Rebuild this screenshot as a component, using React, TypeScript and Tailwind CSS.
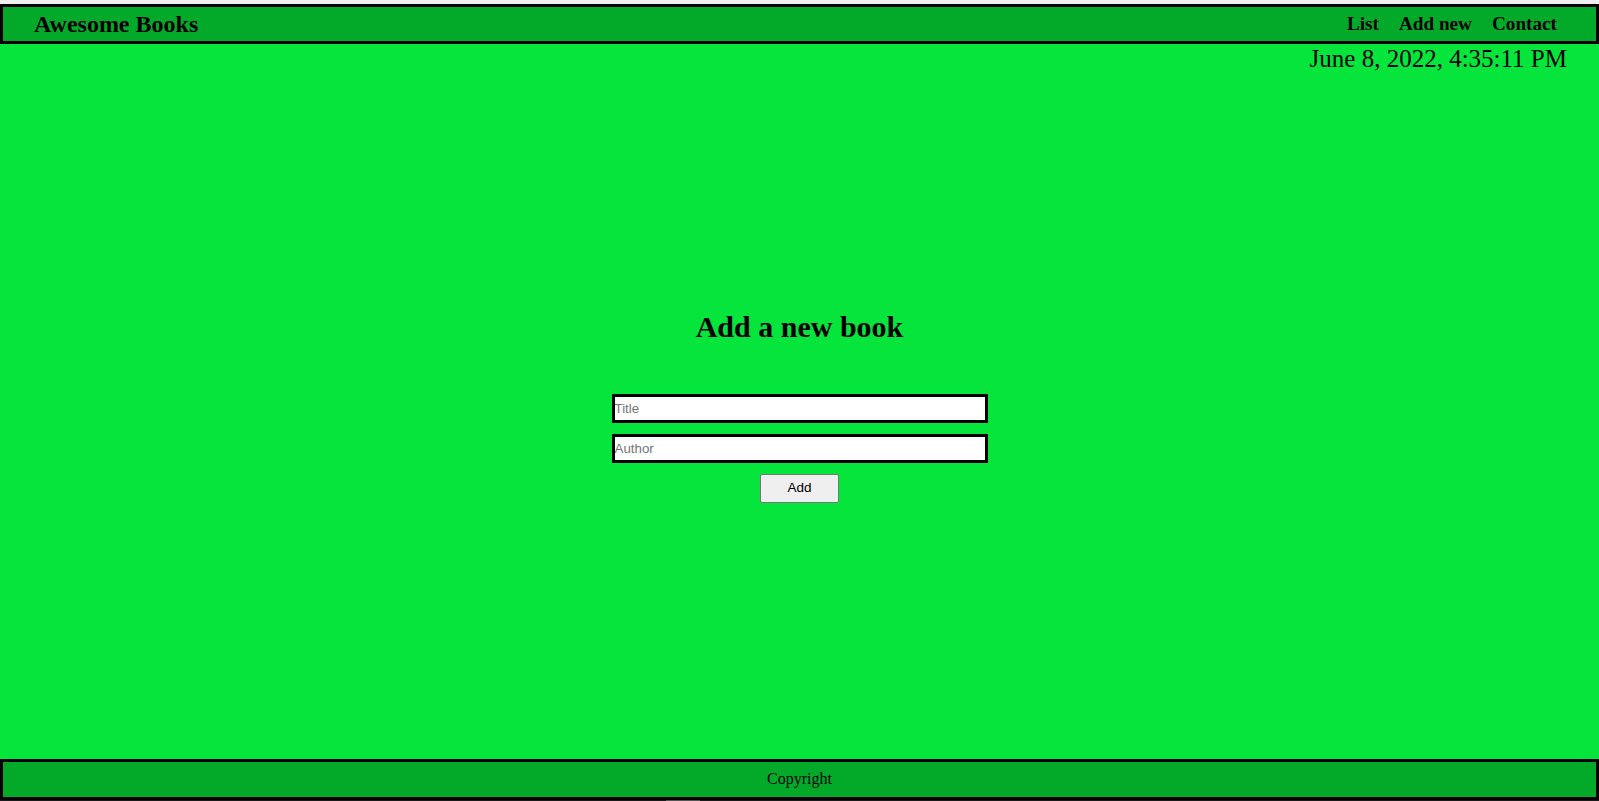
import React from "react";

export default function App() {
  return (
    <div className="flex h-[801px] w-full flex-col overflow-hidden bg-[#05e53b]" style={{ fontFamily: '"Liberation Serif", "Times New Roman", serif' }}>
      <div className="h-[4px] shrink-0 bg-[#f0f0f0]" />
      <header className="flex h-[40px] shrink-0 items-center justify-between border-[3px] border-black bg-[#03aa2a] pl-[31px] pr-[39px] text-black">
        <h1 className="text-[24px] font-bold leading-none">Awesome Books</h1>
        <nav className="flex items-center gap-[20px] text-[19.2px] font-bold leading-none">
          <span>List</span>
          <span>Add new</span>
          <span>Contact</span>
        </nav>
      </header>
      <main className="flex flex-1 flex-col">
        <div className="flex h-[28px] items-center justify-end pr-[32px] text-[25px] leading-none text-black">
          June 8, 2022, 4:35:11 PM
        </div>
        <h2 className="mt-[238px] text-center text-[30px] font-bold leading-[34px] text-black">Add a new book</h2>
        <form className="mt-[50px] flex flex-col items-center" style={{ fontFamily: '"Liberation Sans", Arial, sans-serif' }}>
          <input
            type="text"
            placeholder="Title"
            className="h-[29px] w-[376px] border-[3px] border-black bg-white px-[0px] text-[13.33px] text-black outline-none placeholder:text-[#757575]"
          />
          <input
            type="text"
            placeholder="Author"
            className="mt-[11px] h-[29px] w-[376px] border-[3px] border-black bg-white px-[0px] text-[13.33px] text-black outline-none placeholder:text-[#757575]"
          />
          <button
            type="button"
            className="mt-[11px] h-[29px] w-[79px] rounded-[2px] border border-[#767676] bg-[#efefef] text-[13.5px] text-black"
          >
            Add
          </button>
        </form>
      </main>
      <footer className="flex h-[41px] shrink-0 items-center justify-center border-[3px] border-black bg-[#03aa2a] pb-[1px] text-[16px] text-black">
        Copyright
      </footer>
      <div className="relative h-[1px] shrink-0 bg-[#1a1a1a]">
        <div className="absolute left-[666px] top-0 h-[1px] w-[34px] bg-[#555555]" />
      </div>
    </div>
  );
}
